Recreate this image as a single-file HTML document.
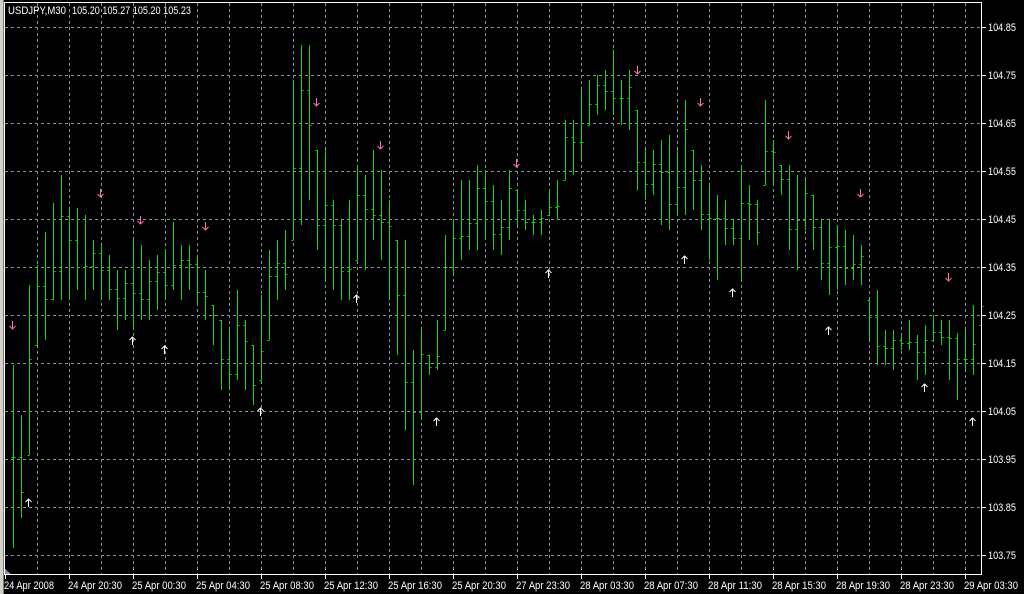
<!DOCTYPE html>
<html><head><meta charset="utf-8"><style>
html,body{margin:0;padding:0;background:#000;width:1024px;height:594px;overflow:hidden}
svg{position:absolute;left:0;top:0}
text{font-family:"Liberation Sans",sans-serif;font-size:11px;fill:#fff}
</style></head><body>
<svg id="s" width="1024" height="594" xmlns="http://www.w3.org/2000/svg" shape-rendering="crispEdges">
<rect x="0" y="0" width="3" height="594" fill="#d4d0c8"/>
<rect x="3" y="0" width="1" height="594" fill="#808080"/>
<g id="grid" stroke="#8796a3" stroke-width="1" stroke-dasharray="3,3"></g>
<g id="bars" stroke="#00e600" stroke-width="1"></g>
<g id="arr" stroke-width="1" shape-rendering="auto"></g>
<rect x="4.5" y="2.5" width="977" height="572" fill="none" stroke="#fff"/>
<polygon points="5,569 5,574 11,574" fill="#8796a3"/>
<text x="8" y="14" textLength="58" lengthAdjust="spacingAndGlyphs">USDJPY,M30</text>
<text x="72" y="14" textLength="119" lengthAdjust="spacingAndGlyphs">105.20 105.27 105.20 105.23</text>
<g id="pl"></g>
<g id="tl"></g>
</svg>
<script>
var NS="http://www.w3.org/2000/svg";
function el(p,t,a,txt){var e=document.createElementNS(NS,t);for(var k in a)e.setAttribute(k,a[k]);if(txt)e.textContent=txt;document.getElementById(p).appendChild(e);return e;}
for(var x=37;x<982;x+=32)el("grid","line",{x1:x+.5,y1:3,x2:x+.5,y2:574});
var prices=["104.85","104.75","104.65","104.55","104.45","104.35","104.25","104.15","104.05","103.95","103.85","103.75"];
for(var i=0;i<12;i++){var y=27+i*48;el("grid","line",{x1:5,y1:y+.5,x2:981,y2:y+.5});
el("pl","line",{x1:982,y1:y+.5,x2:986,y2:y+.5,stroke:"#fff"});
el("pl","text",{x:988,y:y+4,textLength:28,lengthAdjust:"spacingAndGlyphs"},prices[i]);}
var times=["24 Apr 2008","24 Apr 20:30","25 Apr 00:30","25 Apr 04:30","25 Apr 08:30","25 Apr 12:30","25 Apr 16:30","25 Apr 20:30","27 Apr 23:30","28 Apr 03:30","28 Apr 07:30","28 Apr 11:30","28 Apr 15:30","28 Apr 19:30","28 Apr 23:30","29 Apr 03:30"];
for(var i=0;i<16;i++){var x=5+i*64;el("tl","line",{x1:x+.5,y1:575,x2:x+.5,y2:579,stroke:"#fff"});
el("tl","text",{x:x-1,y:589,textLength:i==0?50:54,lengthAdjust:"spacingAndGlyphs"},times[i]);}
var hl=[[365,548],[415,518],[285,455],[265,345],[232,340],[203,300],[175,300],[208,300],[208,290],[215,300],[240,290],[245,300],[255,300],[270,330],[270,320],[240,330],[245,320],[260,320],[255,310],[250,300],[222,290],[245,300],[245,290],[255,305],[270,320],[305,345],[320,390],[330,390],[290,380],[320,390],[345,405],[295,380],[250,340],[240,300],[230,290],[80,240],[45,225],[45,200],[150,250],[150,280],[200,290],[220,300],[200,300],[165,260],[175,270],[150,240],[170,260],[200,300],[240,355],[240,430],[350,485],[330,420],[355,375],[320,370],[235,330],[220,275],[180,260],[180,250],[165,250],[170,240],[185,250],[200,255],[170,240],[190,225],[200,230],[215,235],[210,235],[190,215],[180,220],[120,180],[120,175],[90,160],[80,125],[75,115],[70,110],[50,115],[80,125],[70,130],[110,190],[150,200],[150,195],[140,225],[135,230],[150,215],[100,215],[150,210],[165,230],[185,260],[195,280],[200,245],[220,245],[165,280],[185,240],[200,245],[100,185],[140,185],[165,195],[165,250],[175,270],[180,230],[195,250],[220,280],[220,295],[225,290],[230,285],[235,280],[245,285],[300,340],[290,365],[330,365],[330,370],[335,350],[320,350],[335,380],[325,375],[315,340],[320,345],[320,380],[333,400],[330,370],[305,375],[300,325]];
var prevC=null;
for(var k=0;k<hl.length;k++){var x=13+8*k+.5,h=hl[k][0],l=hl[k][1];
var o=prevC==null?(h+l)/2:Math.min(l,Math.max(h,prevC));
var r=Math.sin(k*1.7)*0.5+0.5;var c=Math.round(h+(l-h)*(0.25+0.5*r));
el("bars","line",{x1:x,y1:h,x2:x,y2:l});
el("bars","line",{x1:x-2,y1:Math.round(o)+.5,x2:x,y2:Math.round(o)+.5});
el("bars","line",{x1:x,y1:c+.5,x2:x+2,y2:c+.5});prevC=c;}
var dn=[[12,325],[100,193],[140,220],[205,226],[316,102],[380,145],[516,163],[637,70],[700,102],[788,135],[860,193],[948,277]];
var up=[[28,503],[132,341],[164,350],[260,412],[356,299],[436,422],[548,274],[684,260],[732,293],[828,331],[924,388],[972,422]];
dn.forEach(function(p){var x=p[0]+.5,y=p[1];el("arr","path",{d:"M"+x+" "+(y-4)+"V"+(y+4)+"M"+(x-3)+" "+(y+1)+"L"+x+" "+(y+4)+"L"+(x+3)+" "+(y+1),stroke:"#ff6eb4",fill:"none"});});
up.forEach(function(p){var x=p[0]+.5,y=p[1];el("arr","path",{d:"M"+x+" "+(y+4)+"V"+(y-4)+"M"+(x-3)+" "+(y-1)+"L"+x+" "+(y-4)+"L"+(x+3)+" "+(y-1),stroke:"#fff",fill:"none"});});
</script>
</body></html>
